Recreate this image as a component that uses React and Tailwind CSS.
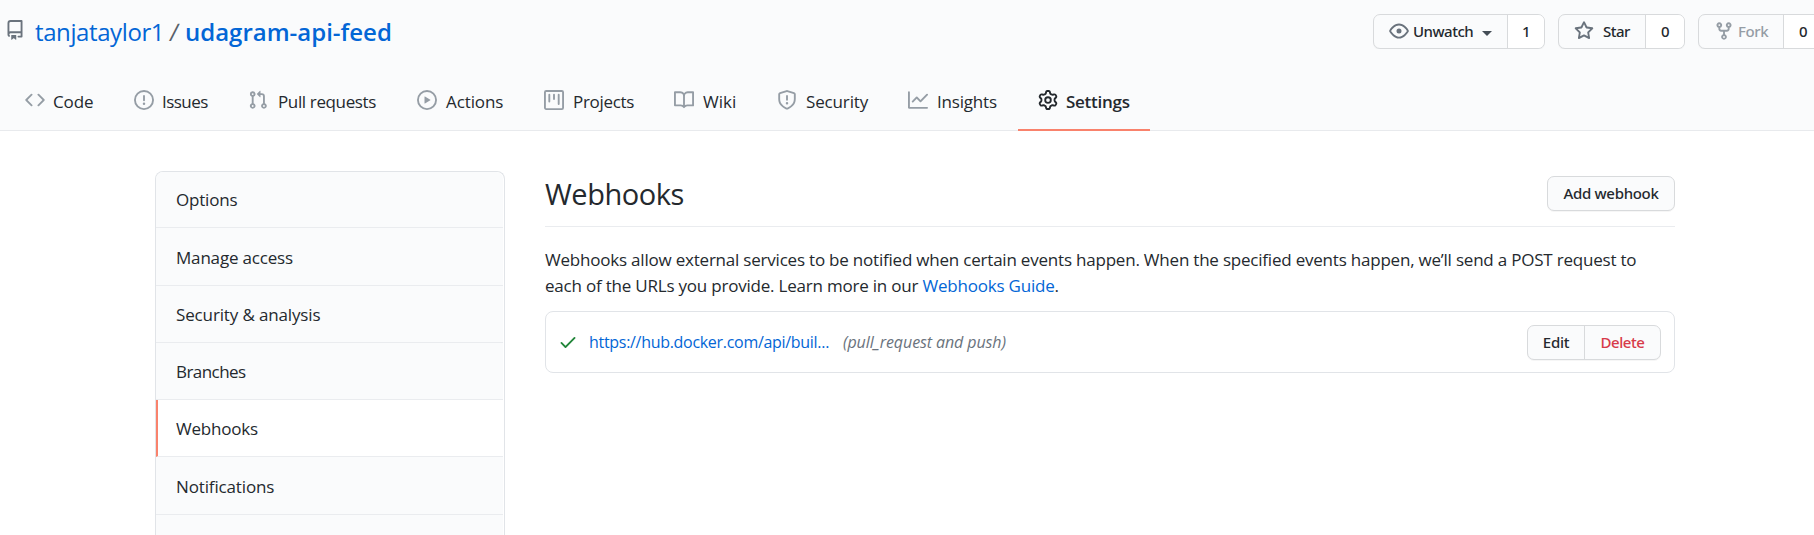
const paths = {
  repo: "M2 2.5A2.5 2.5 0 014.5 0h8.75a.75.75 0 01.75.75v12.5a.75.75 0 01-.75.75h-2.5a.75.75 0 110-1.5h1.75v-2h-8a1 1 0 00-.714 1.7.75.75 0 01-1.072 1.05A2.495 2.495 0 012 11.5v-9zm10.5-1V9h-8c-.356 0-.694.074-1 .208V2.5a1 1 0 011-1h8zM5 12.25v3.25a.25.25 0 00.4.2l1.45-1.087a.25.25 0 01.3 0L8.6 15.7a.25.25 0 00.4-.2v-3.25a.25.25 0 00-.25-.25h-3.5a.25.25 0 00-.25.25z",
  code: "M4.72 3.22a.75.75 0 011.06 1.06L2.06 8l3.72 3.72a.75.75 0 11-1.06 1.06L.47 8.53a.75.75 0 010-1.06l4.25-4.25zm6.56 0a.75.75 0 10-1.06 1.06L13.94 8l-3.72 3.72a.75.75 0 101.06 1.06l4.25-4.25a.75.75 0 000-1.06l-4.25-4.25z",
  issue: "M8 1.5a6.5 6.5 0 100 13 6.5 6.5 0 000-13zM0 8a8 8 0 1116 0A8 8 0 010 8zm9 3a1 1 0 11-2 0 1 1 0 012 0zm-.25-6.25a.75.75 0 00-1.5 0v3.5a.75.75 0 001.5 0v-3.5z",
  pull: "M7.177 3.073L9.573.677A.25.25 0 0110 .854v4.792a.25.25 0 01-.427.177L7.177 3.427a.25.25 0 010-.354zM3.75 2.5a.75.75 0 100 1.5.75.75 0 000-1.5zm-2.25.75a2.25 2.25 0 113 2.122v5.256a2.251 2.251 0 11-1.5 0V5.372A2.25 2.25 0 011.5 3.25zM11 2.5h-1V4h1a1 1 0 011 1v5.628a2.251 2.251 0 101.5 0V5A2.5 2.5 0 0011 2.5zm1 10.25a.75.75 0 111.5 0 .75.75 0 01-1.5 0zM3.75 12a.75.75 0 100 1.5.75.75 0 000-1.5z",
  play: "M1.5 8a6.5 6.5 0 1113 0 6.5 6.5 0 01-13 0zM8 0a8 8 0 100 16A8 8 0 008 0zM6.379 5.227A.25.25 0 006 5.442v5.117a.25.25 0 00.379.214l4.264-2.559a.25.25 0 000-.428L6.379 5.227z",
  project: "M1.75 0A1.75 1.75 0 000 1.75v12.5C0 15.216.784 16 1.75 16h12.5A1.75 1.75 0 0016 14.25V1.75A1.75 1.75 0 0014.25 0H1.75zM1.5 1.75a.25.25 0 01.25-.25h12.5a.25.25 0 01.25.25v12.5a.25.25 0 01-.25.25H1.75a.25.25 0 01-.25-.25V1.75zM11.75 3a.75.75 0 00-.75.75v7.5a.75.75 0 001.5 0v-7.5a.75.75 0 00-.75-.75zm-8.25.75a.75.75 0 011.5 0v5.5a.75.75 0 01-1.5 0v-5.5zM8 3a.75.75 0 00-.75.75v3.5a.75.75 0 001.5 0v-3.5A.75.75 0 008 3z",
  book: "M0 1.75A.75.75 0 01.75 1h4.253c1.227 0 2.317.59 3 1.501A3.744 3.744 0 0111.006 1h4.245a.75.75 0 01.75.75v10.5a.75.75 0 01-.75.75h-4.507a2.25 2.25 0 00-1.591.659l-.622.621a.75.75 0 01-1.06 0l-.622-.621A2.25 2.25 0 005.258 13H.75a.75.75 0 01-.75-.75V1.75zm8.755 3a2.25 2.25 0 012.25-2.25H14.5v9h-3.757c-.71 0-1.4.201-1.992.572l.004-7.322zm-1.504 7.324l.004-5.073-.002-2.253A2.25 2.25 0 005.003 2.5H1.5v9h3.757a3.75 3.75 0 011.994.574z",
  shield: "M7.467.133a1.75 1.75 0 011.066 0l5.25 1.68A1.75 1.75 0 0115 3.48V7c0 1.566-.32 3.182-1.303 4.682-.983 1.498-2.585 2.813-5.032 3.855a1.7 1.7 0 01-1.33 0c-2.447-1.042-4.049-2.357-5.032-3.855C1.32 10.182 1 8.566 1 7V3.48a1.75 1.75 0 011.217-1.667l5.25-1.68zm.61 1.429a.25.25 0 00-.153 0l-5.25 1.68a.25.25 0 00-.174.238V7c0 1.358.275 2.666 1.057 3.86.784 1.194 2.121 2.34 4.366 3.297a.2.2 0 00.154 0c2.245-.956 3.582-2.104 4.366-3.298C13.225 9.666 13.5 8.36 13.5 7V3.48a.25.25 0 00-.174-.237l-5.25-1.68zM9 10.5a1 1 0 11-2 0 1 1 0 012 0zm-.25-5.75a.75.75 0 10-1.5 0v3a.75.75 0 001.5 0v-3z",
  graph: "M1.5 1.75a.75.75 0 00-1.5 0v12.5c0 .414.336.75.75.75h14.5a.75.75 0 000-1.5H1.5V1.75zm14.28 2.53a.75.75 0 00-1.06-1.06L10 7.94 7.53 5.47a.75.75 0 00-1.06 0L3.22 8.72a.75.75 0 001.06 1.06L7 7.06l2.47 2.47a.75.75 0 001.06 0l5.25-5.25z",
  gear: "M7.429 1.525a6.593 6.593 0 011.142 0c.036.003.108.036.137.146l.289 1.105c.147.56.55.967.997 1.189.174.086.341.183.501.29.417.278.97.423 1.53.27l1.102-.303c.11-.03.175.016.195.046.219.31.41.641.573.989.014.031.022.11-.059.19l-.815.806c-.411.406-.562.957-.53 1.456a4.588 4.588 0 010 .582c-.032.499.119 1.05.53 1.456l.815.806c.08.08.073.159.059.19a6.494 6.494 0 01-.573.99c-.02.029-.086.074-.195.045l-1.103-.303c-.559-.153-1.112-.008-1.529.27-.16.107-.327.204-.5.29-.449.222-.851.628-.998 1.189l-.289 1.105c-.029.11-.101.143-.137.146a6.613 6.613 0 01-1.142 0c-.036-.003-.108-.037-.137-.146l-.289-1.105c-.147-.56-.55-.967-.997-1.189a4.502 4.502 0 01-.501-.29c-.417-.278-.97-.423-1.53-.27l-1.102.303c-.11.03-.175-.016-.195-.046a6.492 6.492 0 01-.573-.989c-.014-.031-.022-.11.059-.19l.815-.806c.411-.406.562-.957.53-1.456a4.587 4.587 0 010-.582c.032-.499-.119-1.05-.53-1.456l-.815-.806c-.08-.08-.073-.159-.059-.19a6.44 6.44 0 01.573-.99c.02-.029.086-.075.195-.045l1.103.303c.559.153 1.112.008 1.529-.27.16-.107.327-.204.5-.29.449-.222.851-.628.998-1.189l.289-1.105c.029-.11.101-.143.137-.146zM8 0c-.236 0-.47.01-.701.03-.743.065-1.29.615-1.458 1.261l-.29 1.106c-.017.066-.078.158-.211.224a5.994 5.994 0 00-.668.386c-.123.082-.233.09-.3.071L3.27 2.776c-.644-.177-1.392.02-1.82.63a7.977 7.977 0 00-.704 1.217c-.315.675-.111 1.422.363 1.891l.815.806c.05.048.098.147.088.294a6.084 6.084 0 000 .772c.01.147-.038.246-.088.294l-.815.806c-.474.469-.678 1.216-.363 1.891.2.428.436.835.704 1.218.428.609 1.176.806 1.82.63l1.103-.303c.066-.019.176-.011.299.071.213.143.436.272.668.386.133.066.194.158.212.224l.289 1.106c.169.646.715 1.196 1.458 1.26a8.094 8.094 0 001.402 0c.743-.064 1.29-.614 1.458-1.26l.29-1.106c.017-.066.078-.158.211-.224a5.98 5.98 0 00.668-.386c.123-.082.233-.09.3-.071l1.102.302c.644.177 1.392-.02 1.82-.63.268-.382.505-.789.704-1.217.315-.675.111-1.422-.364-1.891l-.814-.806c-.05-.048-.098-.147-.088-.294a6.1 6.1 0 000-.772c-.01-.147.039-.246.088-.294l.814-.806c.475-.469.679-1.216.364-1.891a7.992 7.992 0 00-.704-1.218c-.428-.609-1.176-.806-1.82-.63l-1.103.303c-.066.019-.176.011-.299-.071a5.991 5.991 0 00-.668-.386c-.133-.066-.194-.158-.212-.224L10.16 1.29C9.99.645 9.444.095 8.701.031A8.094 8.094 0 008 0zm1.5 8a1.5 1.5 0 11-3 0 1.5 1.5 0 013 0zM11 8a3 3 0 11-6 0 3 3 0 016 0z",
  eye: "M1.679 7.932c.412-.621 1.242-1.75 2.366-2.717C5.175 4.242 6.527 3.5 8 3.5c1.473 0 2.824.742 3.955 1.715 1.124.967 1.954 2.096 2.366 2.717a.119.119 0 010 .136c-.412.621-1.242 1.75-2.366 2.717C10.825 11.758 9.473 12.5 8 12.5c-1.473 0-2.824-.742-3.955-1.715C2.92 9.818 2.09 8.69 1.679 8.068a.119.119 0 010-.136zM8 2c-1.981 0-3.67.992-4.933 2.078C1.797 5.169.88 6.423.43 7.1a1.619 1.619 0 000 1.798c.45.678 1.367 1.932 2.637 3.024C4.329 13.008 6.019 14 8 14c1.981 0 3.67-.992 4.933-2.078 1.27-1.091 2.187-2.345 2.637-3.023a1.619 1.619 0 000-1.798c-.45-.678-1.367-1.932-2.637-3.023C11.671 2.992 9.981 2 8 2zm0 8a2 2 0 100-4 2 2 0 000 4z",
  star: "M8 .25a.75.75 0 01.673.418l1.882 3.815 4.21.612a.75.75 0 01.416 1.279l-3.046 2.97.719 4.192a.75.75 0 01-1.088.791L8 12.347l-3.766 1.98a.75.75 0 01-1.088-.79l.72-4.194L.818 6.374a.75.75 0 01.416-1.28l4.21-.611L7.327.668A.75.75 0 018 .25zm0 2.445L6.615 5.5a.75.75 0 01-.564.41l-3.097.45 2.24 2.184a.75.75 0 01.216.664l-.528 3.084 2.769-1.456a.75.75 0 01.698 0l2.77 1.456-.53-3.084a.75.75 0 01.216-.664l2.24-2.183-3.096-.45a.75.75 0 01-.564-.41L8 2.694v.001z",
  fork: "M5 3.25a.75.75 0 11-1.5 0 .75.75 0 011.5 0zm0 2.122a2.25 2.25 0 10-1.5 0v.878A2.25 2.25 0 005.75 8.5h1.5v2.128a2.251 2.251 0 101.5 0V8.5h1.5a2.25 2.25 0 002.25-2.25v-.878a2.25 2.25 0 10-1.5 0v.878a.75.75 0 01-.75.75h-4.5A.75.75 0 015 6.25v-.878zm3.75 7.378a.75.75 0 11-1.5 0 .75.75 0 011.5 0zm3-8.75a.75.75 0 100-1.5.75.75 0 000 1.5z",
  check: "M13.78 4.22a.75.75 0 010 1.06l-7.25 7.25a.75.75 0 01-1.06 0L2.22 9.28a.75.75 0 011.06-1.06L6 10.94l6.72-6.72a.75.75 0 011.06 0z",
};

function Octicon({ name, className = "" }) {
  return (
    <svg viewBox="0 0 16 16" fill="currentColor" fillRule="evenodd" className={`size-5 shrink-0 ${className}`}>
      <path d={paths[name]} />
    </svg>
  );
}

const tabs = [
  { icon: "code", label: "Code", width: "w-[109px]", text: "pl-[8px] tracking-[-0.1px]" },
  { icon: "issue", label: "Issues", width: "w-[114px]", text: "pl-[8px] tracking-[-0.55px]" },
  { icon: "pull", label: "Pull requests", width: "w-[169px]", text: "pl-[10px] tracking-[-0.37px]" },
  { icon: "play", label: "Actions", width: "w-[127px]", text: "pl-[9px] tracking-[-0.1px]" },
  { icon: "project", label: "Projects", width: "w-[130px]", text: "pl-[9px] tracking-[-0.3px]" },
  { icon: "book", label: "Wiki", width: "w-[103px]", text: "pl-[9px] tracking-normal" },
  { icon: "shield", label: "Security", width: "w-[131px]", text: "pl-[9px] tracking-[-0.15px]" },
  { icon: "graph", label: "Insights", width: "w-[130px]", text: "pl-[9px] tracking-[-0.2px]" },
  { icon: "gear", label: "Settings", width: "w-[132px]", text: "pl-[8px] font-semibold tracking-[-0.27px]", active: true },
];

const menu = [
  { label: "Options", size: "h-[56px]", text: "rounded-t-[7px] pt-px tracking-[-0.2px]" },
  { label: "Manage access", size: "h-[58px]", text: "pt-0.5 tracking-[-0.18px]" },
  { label: "Security & analysis", size: "h-[57px]", text: "pt-0.5 tracking-[-0.14px]" },
  { label: "Branches", size: "h-[57px]", text: "pt-0.5 tracking-[-0.55px]" },
  { label: "Webhooks", size: "h-[57px]", text: "pt-0.5 tracking-[-0.22px]", active: true },
  { label: "Notifications", size: "h-[58px]", text: "pt-0.5 tracking-[-0.14px]" },
];

const buttonBox = "flex h-[35px] shrink-0 overflow-hidden rounded-[7px] border border-[#d8dadc] bg-[#fafbfc] font-['Noto_Sans','Open_Sans',sans-serif] text-[15px] font-medium shadow-[0_1px_0_rgba(27,31,35,0.04)]";

function CountButton({ className, mainClass, countClass, count, children }) {
  return (
    <div className={`${buttonBox} ${className}`}>
      <button className={`flex items-center ${mainClass}`}>{children}</button>
      <span className={`flex items-center border-l border-[#d8dadc] bg-white ${countClass}`}>{count}</span>
    </div>
  );
}

function Header() {
  return (
    <header className="h-[131px] border-b border-[#e8eaed] bg-[#fafbfc]">
      <div className="flex h-[72px] items-start">
        <Octicon name="repo" className="ml-[5px] mt-5 text-[#6a737d]" />
        <h1 className="mt-[14px] flex pl-[10px] text-[24px] leading-9 text-[#0366d6]">
          <a className="w-[135px] tracking-[-0.4px]">tanjataylor1</a>
          <span className="w-[15px] -skew-x-8 text-[#586069]">/</span>
          <a className="font-semibold">udagram-api-feed</a>
        </h1>
        <div className="ml-auto flex w-[441px] gap-[13px] overflow-hidden pt-[14px]">
          <CountButton className="w-[172px]" mainClass="w-[133px] pl-[15px]" countClass="flex-1 pl-[14px]" count="1">
            <Octicon name="eye" className="-mt-0.5 text-[#6a737d]" />
            <span className="ml-[4px] w-[60px] tracking-[-0.5px]">Unwatch</span>
            <span className="ml-[9px] mt-[3px] border-x-5 border-t-5 border-x-transparent border-t-[#444d56]" />
          </CountButton>
          <CountButton className="w-[127px]" mainClass="w-[86px] pl-[15px]" countClass="flex-1 pl-[15px]" count="0">
            <Octicon name="star" className="-mt-0.5 text-[#6a737d]" />
            <span className="ml-[9px] tracking-[-0.5px]">Star</span>
          </CountButton>
          <CountButton className="w-[132px]" mainClass="w-[84px] pl-[15px] text-[#959da5]" countClass="flex-1 pl-[15px]" count="0">
            <Octicon name="fork" className="-mt-0.5" />
            <span className="ml-[4px] tracking-[-0.4px]">Fork</span>
          </CountButton>
        </div>
      </div>
      <nav className="flex h-[59px] pl-[5px]">
        {tabs.map((t) => (
          <a key={t.label} className={`flex items-center border-b-2 pl-5 ${t.width} ${t.active ? "border-[#f9826c]" : "border-transparent"}`}>
            <Octicon name={t.icon} className={`-mt-px ${t.active ? "text-[#24292e]" : "text-[#959da5]"}`} />
            <span className={`pt-[2px] text-[17px] whitespace-nowrap ${t.text}`}>{t.label}</span>
          </a>
        ))}
      </nav>
    </header>
  );
}

function Sidebar() {
  return (
    <nav className="flex h-[364px] w-[350px] shrink-0 flex-col rounded-t-[8px] border border-b-0 border-[#e1e4e8] bg-white pr-px">
      {menu.map((m) => (
        <a
          key={m.label}
          className={`flex shrink-0 items-center border-b border-[#eaecef] text-[17px] ${m.size} ${m.text} ${
            m.active ? "border-l-2 border-l-[#f9826c] bg-white pl-[18px]" : "bg-[#fafbfc] pl-5"
          }`}
        >
          {m.label}
        </a>
      ))}
      <div className="flex-1 bg-[#fafbfc]" />
    </nav>
  );
}

export default function App() {
  return (
    <div className="h-[535px] w-full overflow-hidden bg-white font-['Open_Sans','Noto_Sans',sans-serif] text-[#24292e]">
      <Header />
      <div className="flex gap-10 pl-[155px] pt-10">
        <Sidebar />
        <main className="w-[1130px]">
          <div className="flex h-[56px] items-start justify-between border-b border-[#eaecef]">
            <h2 className="text-[29px] leading-[46px] tracking-[-0.45px]">Webhooks</h2>
            <button className={`${buttonBox} mt-[5px] w-[128px] items-center justify-center tracking-[-0.3px]`}>Add webhook</button>
          </div>
          <p className="pt-[20px] text-[17px] leading-[26px] tracking-[-0.21px]">
            Webhooks allow external services to be notified when certain events happen. When the specified events happen, we’ll send a POST request to
            <br />
            each of the URLs you provide. Learn more in our <a className="text-[#0366d6]">Webhooks Guide</a>.
          </p>
          <div className="mt-[12px] flex h-[62px] items-center rounded-[8px] border border-[#e1e4e8] pl-[12px] pr-[13px] text-base">
            <Octicon name="check" className="text-[#22863a]" />
            <a className="ml-[11px] w-[254px] tracking-[-0.3px] text-[#0366d6]">https://hub.docker.com/api/buil...</a>
            <em className="tracking-[-0.1px] text-[#6a737d]">(pull_request and push)</em>
            <div className={`${buttonBox} ml-auto w-[134px]`}>
              <button className="w-[56px] tracking-[-0.3px]">Edit</button>
              <button className="flex-1 border-l border-[#d8dadc] tracking-[-0.4px] text-[#d73a49]">Delete</button>
            </div>
          </div>
        </main>
      </div>
    </div>
  );
}
